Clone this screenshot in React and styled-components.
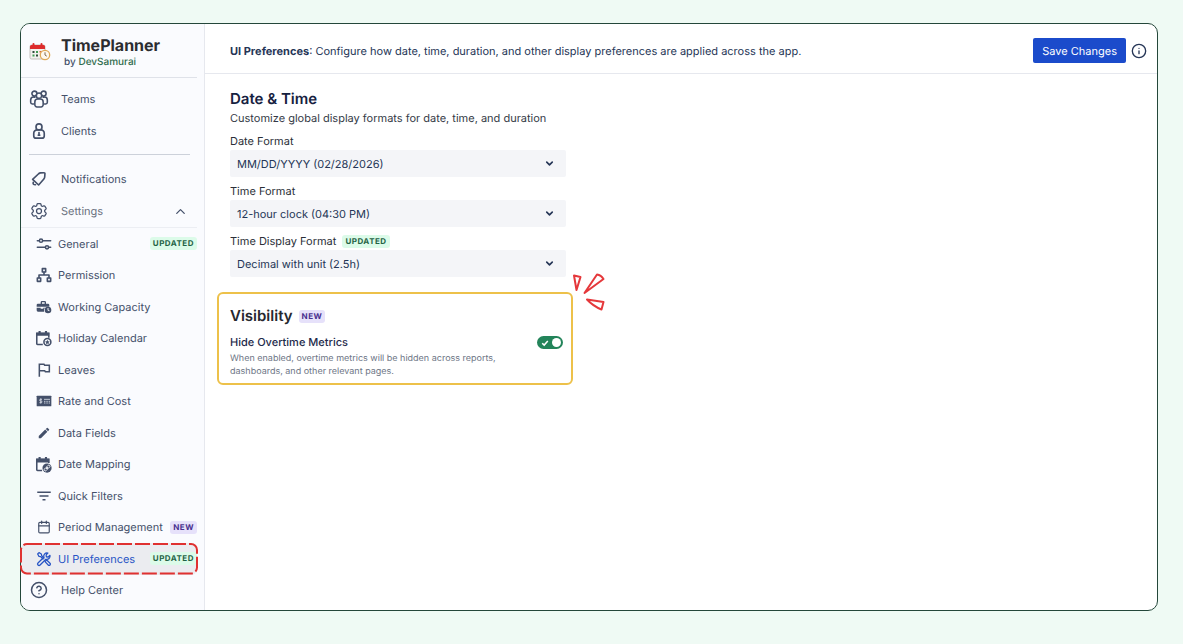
import React from "react";
import styled, { createGlobalStyle } from "styled-components";
import { Calendar, ChevronDown, ChevronUp, CircleQuestionMark, Info } from "lucide-react";
import { HiOutlineCog6Tooth } from "react-icons/hi2";
import { MdEdit, MdFilterList } from "react-icons/md";

const LogoIcon = () => (
  <svg width="22" height="20" viewBox="0 0 22 20" aria-hidden="true">
    <rect x="1" y="3" width="15" height="14" rx="1.5" fill="#f3f1ee" stroke="#b9b4ad" strokeWidth="0.8" />
    <path d="M1 7V4.5A1.5 1.5 0 0 1 2.500 3h12A1.500 1.500 0 0 1 16 4.500V7z" fill="#dd2c2c" />
    <path d="M4.500 2v2.500M12.500 2v2.500" stroke="#dd2c2c" strokeWidth="2" strokeLinecap="round" />
    <path d="M7 9h2v2H7zM3.500 12.500h2v2h-2z" fill="#3f9b52" />
    <path d="M3.500 9h2v2h-2zM7 12.500h2v2H7z" fill="#2f4b3a" />
    <path d="M10.500 9h2v1.500h-2z" fill="#e0673a" />
    <circle cx="16" cy="13" r="4.700" fill="#fff8ec" stroke="#dfa956" strokeWidth="1.300" />
    <path d="M16 10.300V13l1.800 1.200" stroke="#7b6a55" fill="none" strokeWidth="1" />
  </svg>
);

const Line = ({ size = 18, width = 2, children }) => (
  <svg
    width={size}
    height={size}
    viewBox="0 0 24 24"
    fill="none"
    stroke="currentColor"
    strokeWidth={width}
    strokeLinecap="round"
    strokeLinejoin="round"
    aria-hidden="true"
  >
    {children}
  </svg>
);

const TeamsIcon = () => (
  <Line size={20} width={1.900}>
    <circle cx="6.500" cy="5.500" r="3" />
    <circle cx="17.500" cy="5.500" r="3" />
    <circle cx="12" cy="8" r="3.200" fill="#fafbfe" />
    <path d="M5.500 18H4a2 2 0 0 1-2-2v-3a3.500 3.500 0 0 1 3.500-3.300h1.700" />
    <path d="M18.500 18H20a2 2 0 0 0 2-2v-3a3.500 3.500 0 0 0-3.500-3.300h-1.700" />
    <path d="M7 15.500a3.500 3.500 0 0 1 3.500-3.500h3a3.500 3.500 0 0 1 3.500 3.500V19a2.500 2.500 0 0 1-2.500 2.500h-5A2.500 2.500 0 0 1 7 19z" />
  </Line>
);

const ClientsIcon = () => (
  <Line size={18} width={2.200}>
    <circle cx="12" cy="6.500" r="4" />
    <path d="M5 15a4.500 4.500 0 0 1 4.500-4.500h5A4.500 4.500 0 0 1 19 15v3.500a3 3 0 0 1-3 3H8a3 3 0 0 1-3-3z" />
    <path d="M12 14v3.500M11 17.500h2" />
  </Line>
);

const NotificationsIcon = () => (
  <Line size={18} width={2.200}>
    <path d="M3.500 12.500 11.500 5q1.200-1 2.600-1.100l4.600-.2q1.300 0 1.200 1.300l-.3 4.300q-.1 1.500-1.100 2.600L11.500 20z" />
    <path d="M4.300 16.500q-.8 3.300 3 3.200" />
  </Line>
);

const GeneralIcon = () => (
  <Line size={16} width={2.300}>
    <path d="M2 7h3M10 7h12M2 17h12M19 17h3" />
    <circle cx="7.500" cy="7" r="2.400" />
    <circle cx="16.500" cy="17" r="2.400" />
  </Line>
);

const PermissionIcon = () => (
  <Line size={16} width={2.400}>
    <rect x="9.500" y="2.500" width="5" height="5" />
    <rect x="2" y="16.500" width="5" height="5" />
    <rect x="17" y="16.500" width="5" height="5" />
    <path d="M12 8v4M4.500 16v-4h15v4" />
  </Line>
);

const CapacityIcon = () => (
  <svg width="16" height="16" viewBox="0 0 24 24" fill="currentColor" aria-hidden="true">
    <path d="M7 7V5a2 2 0 0 1 2-2h4a2 2 0 0 1 2 2v2h3a2 2 0 0 1 2 2v2.500H1V9a2 2 0 0 1 2-2zm2 0h4V5H9z" />
    <path d="M1 13h6v1.500h4V13h2.500a6 6 0 0 0-1.300 6H3a2 2 0 0 1-2-2z" />
    <path fillRule="evenodd" d="M18 11.500a5 5 0 1 1 0 10 5 5 0 0 1 0-10zm-.7 2v3.400l2.400 1.400.7-1.100-1.700-1v-2.700z" />
  </svg>
);

const HolidayIcon = () => (
  <svg width="17" height="17" viewBox="0 0 24 24" fill="none" stroke="currentColor" aria-hidden="true">
    <path d="M11 20.500H3.500a1 1 0 0 1-1-1V4.500h17V11" strokeWidth="2.200" />
    <path d="M2 4h18v4H2zM5 1.500h3v4H5zM14 1.500h3v4h-3z" fill="currentColor" stroke="none" />
    <circle cx="17.500" cy="17" r="4.900" strokeWidth="2.200" />
    <path d="m17.500 13.800 1 2.200 2.300.3-1.700 1.600.4 2.300-2-1.200-2 1.200.4-2.300-1.700-1.600 2.300-.3z" fill="currentColor" stroke="none" />
  </svg>
);

const LeavesIcon = () => (
  <svg width="16" height="16" viewBox="0 0 24 24" fill="none" stroke="currentColor" strokeWidth="2.300" aria-hidden="true">
    <path d="M5 22V3.500h7l1 1.500h7v9.500h-6l-1-1.500H5" />
  </svg>
);

const MappingIcon = () => (
  <svg width="17" height="17" viewBox="0 0 24 24" fill="none" stroke="currentColor" aria-hidden="true">
    <path d="M10 20.500H3.500a1 1 0 0 1-1-1V4.500h17V10" strokeWidth="2.200" />
    <path d="M2 4h18v5H2zM5 1.500h3v4H5zM14 1.500h3v4h-3z" fill="currentColor" stroke="none" />
    <circle cx="17" cy="17" r="6.500" fill="currentColor" stroke="none" />
    <g stroke="#fafbfe" strokeWidth="1.200" transform="rotate(-45 17 17)">
      <rect x="12" y="15.300" width="5" height="3.400" rx="1.700" />
      <rect x="17" y="15.300" width="5" height="3.400" rx="1.700" />
      <path d="M15 17h4" />
    </g>
  </svg>
);

const RateIcon = () => (
  <svg width="16" height="16" viewBox="0 0 24 24" fill="none" aria-hidden="true">
    <rect x="1" y="4" width="22" height="16" rx="1" fill="currentColor" />
    <path
      d="M9 9.500H6.700a1.200 1.200 0 0 0 0 2.500h1a1.200 1.200 0 0 1 0 2.500H5.200M7.200 8v8M12 9.500h9M12 12.500h2.200M15.500 12.500h2.200M19 12.500h2M12 15h2.200M15.500 15h2.200M19 15h2"
      stroke="#dfe4ee"
      strokeWidth="1.200"
    />
  </svg>
);

const ToolsIcon = () => (
  <Line size={16} width={1.900}>
    <path d="M2.500 4.500l2-2 3.500 2 .5 2.500 3.500 3.500M2.500 4.500l2 3.500 2.500.5 3.500 3.500" />
    <path d="m13.500 16 2.500-2.500 5 4.800a1.900 1.900 0 0 1-2.700 2.700z" />
    <path d="M21 6.500 18.300 9l-2.800-.3-.3-2.800L17.800 3a5 5 0 0 0-6 6.300L3 18a2.100 2.100 0 0 0 3.100 3.100l8.700-8.700A5 5 0 0 0 21 6.500z" />
  </Line>
);

const SparkIcon = () => (
  <svg width="34" height="42" viewBox="0 0 34 42" fill="none" stroke="#e5383b" strokeWidth="2" strokeLinejoin="round" aria-hidden="true">
    <path d="M2 3.500 8.500 5 4.500 18z" />
    <path d="M12.500 21 25 2.500Q29 3 31.500 7z" />
    <path d="M15 27.500 31.500 30 29.500 37.500Q21 34 15 27.500z" />
  </svg>
);

const mainLinks = [
  { label: "Teams", icon: <TeamsIcon /> },
  { label: "Clients", icon: <ClientsIcon /> },
];

const settingLinks = [
  { label: "General", icon: <GeneralIcon />, tag: "UPDATED" },
  { label: "Permission", icon: <PermissionIcon /> },
  { label: "Working Capacity", icon: <CapacityIcon /> },
  { label: "Holiday Calendar", icon: <HolidayIcon /> },
  { label: "Leaves", icon: <LeavesIcon /> },
  { label: "Rate and Cost", icon: <RateIcon /> },
  { label: "Data Fields", icon: <MdEdit size={14} /> },
  { label: "Date Mapping", icon: <MappingIcon /> },
  { label: "Quick Filters", icon: <MdFilterList size={18} /> },
  { label: "Period Management", icon: <Calendar size={14} />, tag: "NEW" },
  { label: "UI Preferences", icon: <ToolsIcon />, tag: "UPDATED", active: true },
];

const fields = [
  { id: "date-format", label: "Date Format", value: "MM/DD/YYYY (02/28/2026)" },
  { id: "time-format", label: "Time Format", value: "12-hour clock (04:30 PM)" },
  { id: "time-display", label: "Time Display Format", value: "Decimal with unit (2.5h)", tag: "UPDATED" },
];

const App = () => {
  return (
    <Page>
      <GlobalStyle />
      <Frame>
        <Sidebar>
          <Brand>
            <LogoIcon />
            <div>
              <BrandName>TimePlanner</BrandName>
              <BrandBy>
                by <a href="#devsamurai">DevSamurai</a>
              </BrandBy>
            </div>
          </Brand>
          <NavGroup>
            {mainLinks.map((link) => (
              <NavLink key={link.label} href="#">
                <IconBox>{link.icon}</IconBox>
                {link.label}
              </NavLink>
            ))}
          </NavGroup>
          <Divider />
          <NavGroup>
            <NavLink href="#">
              <IconBox>
                <NotificationsIcon />
              </IconBox>
              Notifications
            </NavLink>
            <NavToggle type="button" aria-expanded="true">
              <IconBox>
                <HiOutlineCog6Tooth size={20} />
              </IconBox>
              Settings
              <ChevronUp size={15} />
            </NavToggle>
          </NavGroup>
          <SubNav>
            {settingLinks.map((link) => (
              <SubLink key={link.label} href="#" $active={link.active}>
                <SubIconBox>{link.icon}</SubIconBox>
                {link.label}
                {link.tag && <Tag $kind={link.tag}>{link.tag}</Tag>}
                {link.active && (
                  <Outline aria-hidden="true">
                    <rect x="1" y="1" rx="6" />
                  </Outline>
                )}
              </SubLink>
            ))}
            <NavLink href="#">
              <IconBox>
                <CircleQuestionMark size={18} />
              </IconBox>
              Help Center
            </NavLink>
          </SubNav>
        </Sidebar>
        <Main>
          <TopBar>
            <Intro>
              <b>UI Preferences</b>: Configure how date, time, duration, and other display
              preferences are applied across the app.
            </Intro>
            <SaveButton type="button">Save Changes</SaveButton>
            <InfoButton type="button" aria-label="Information">
              <Info size={16} />
            </InfoButton>
          </TopBar>
          <Content>
            <Section>
              <Title>Date &amp; Time</Title>
              <Subtitle>Customize global display formats for date, time, and duration</Subtitle>
              {fields.map((field) => (
                <Field key={field.id}>
                  <FieldLabel htmlFor={field.id}>
                    {field.label}
                    {field.tag && <Tag $kind={field.tag}>{field.tag}</Tag>}
                  </FieldLabel>
                  <SelectWrap>
                    <Select id={field.id}>
                      <option>{field.value}</option>
                    </Select>
                    <ChevronDown size={11} strokeWidth={3.500} />
                  </SelectWrap>
                </Field>
              ))}
            </Section>
            <Card>
              <CardTitle>
                Visibility <Tag $kind="NEW">NEW</Tag>
              </CardTitle>
              <Row>
                <RowLabel htmlFor="hide-overtime">Hide Overtime Metrics</RowLabel>
                <Switch>
                  <input id="hide-overtime" type="checkbox" defaultChecked />
                  <svg width="8" height="8" viewBox="0 0 8 8" aria-hidden="true">
                    <path d="m1.200 4.200 2 1.900 3.600-4" fill="none" stroke="#fff" strokeWidth="1.500" />
                  </svg>
                </Switch>
              </Row>
              <Hint>
                When enabled, overtime metrics will be hidden across reports, dashboards, and other
                relevant pages.
              </Hint>
              <Spark>
                <SparkIcon />
              </Spark>
            </Card>
          </Content>
        </Main>
      </Frame>
    </Page>
  );
};

const GlobalStyle = createGlobalStyle`
  * {
    box-sizing: border-box;
  }

  body {
    margin: 0;
    background: #effaf4;
    color: #253556;
    font-family: Inter, "Liberation Sans", sans-serif;
    font-size: 11px;
    line-height: 16px;
    text-rendering: geometricPrecision;
  }

  h1, h2, p {
    margin: 0;
  }

  a {
    color: inherit;
    text-decoration: none;
  }

  button, select {
    font: inherit;
    color: inherit;
    border: 0;
    text-rendering: inherit;
  }

  svg {
    flex-shrink: 0;
  }
`;

const Page = styled.div`
  min-height: 100vh;
  display: flex;
  padding: 23px 25px 33px 20px;
`;

const Frame = styled.div`
  flex: 1;
  display: flex;
  border: 1px solid #24473a;
  border-radius: 10px;
  background: #fff;
`;

const Sidebar = styled.aside`
  width: 184px;
  display: flex;
  flex-direction: column;
  padding: 0 7px 4px 0;
  border-right: 1px solid #e6e8ee;
  border-radius: 9px 0 0 9px;
  background: #fafbfe;
  color: #44506a;
`;

const Brand = styled.div`
  height: 54px;
  display: flex;
  align-items: center;
  gap: 10px;
  padding: 2px 0 0 8px;
  border-bottom: 1px solid #dfe2e9;
`;

const BrandName = styled.h1`
  color: #2b2c30;
  font-size: 16px;
  font-weight: 700;
  line-height: 20px;
`;

const BrandBy = styled.p`
  padding-left: 3px;
  font-size: 10px;
  line-height: 14px;
  font-weight: 500;

  a {
    color: #2f6b4d;
  }
`;

const NavGroup = styled.nav`
  display: flex;
  flex-direction: column;
  padding-top: 5px;
`;

const NavLink = styled.a`
  height: 32px;
  display: flex;
  align-items: center;
  gap: 12px;
  padding-left: 8px;
`;

const NavToggle = styled.button`
  height: 32px;
  display: flex;
  align-items: center;
  gap: 12px;
  padding: 0 9px 0 8px;
  background: none;
  color: #6b7280;

  > svg {
    margin-left: auto;
    color: #44506a;
  }
`;

const IconBox = styled.span`
  width: 20px;
  display: flex;
  justify-content: center;
  color: #44506a;
`;

const Divider = styled.hr`
  width: 161px;
  margin: 7px 0 3px 8px;
  border: 0;
  border-top: 1px solid #ccd1da;
`;

const SubNav = styled.nav`
  flex: 1;
  display: grid;
  grid-auto-rows: minmax(28px, 1fr);
  border-top: 1px solid #eceef3;

  ${NavLink} {
    height: auto;
  }
`;

const SubLink = styled.a`
  position: relative;
  display: flex;
  align-items: center;
  gap: 6px;
  padding-left: 14px;
  border-radius: 6px;
  background: ${({ $active }) => ($active ? "#ebecf0" : "transparent")};
  color: ${({ $active }) => ($active ? "#2754c5" : "inherit")};
`;

const SubIconBox = styled.span`
  width: 17px;
  display: flex;
  justify-content: center;
`;

const Tag = styled.span`
  padding: 0 3px;
  border-radius: 3px;
  font-size: 8px;
  font-weight: 700;
  line-height: 13px;
  letter-spacing: 0.5px;
  background: ${({ $kind }) => ($kind === "NEW" ? "#e6e1fa" : "#dcfbe9")};
  color: ${({ $kind }) => ($kind === "NEW" ? "#49308f" : "#1f6244")};

  ${SubLink} & {
    margin-left: auto;
  }
`;

const Outline = styled.svg`
  position: absolute;
  inset: 0 -1px;
  width: calc(100% + 2px);
  height: 100%;

  rect {
    width: calc(100% - 2px);
    height: calc(100% - 2px);
    fill: none;
    stroke: #e03131;
    stroke-width: 2px;
    stroke-dasharray: 15 3;
  }
`;

const Main = styled.main`
  flex: 1;
  min-width: 0;
`;

const TopBar = styled.header`
  min-height: 50px;
  display: flex;
  align-items: center;
  padding: 4px 10px 0 25px;
  border-bottom: 1px solid #e6e8ee;
`;

const Intro = styled.p`
  flex: 1;
`;

const SaveButton = styled.button`
  height: 25px;
  padding: 0 9px;
  border-radius: 2px;
  background: #1b4bcb;
  color: #fff;
  cursor: pointer;
`;

const InfoButton = styled.button`
  display: flex;
  margin-left: 5px;
  padding: 0;
  background: none;
  cursor: pointer;
`;

const Content = styled.div`
  max-width: 368px;
  padding: 15px 0 15px 12px;
`;

const Section = styled.section`
  padding: 0 7px 0 13px;
`;

const Title = styled.h2`
  color: #16213f;
  font-size: 15px;
  font-weight: 600;
  line-height: 20px;
`;

const Subtitle = styled.p`
  margin: 1px 0 7px;
  color: #343a46;
`;

const Field = styled.div`
  margin-bottom: 6px;
`;

const FieldLabel = styled.label`
  display: flex;
  align-items: center;
  gap: 6px;
  margin-bottom: 1px;
  color: #2b2f38;
`;

const SelectWrap = styled.div`
  display: flex;
  align-items: center;

  svg {
    margin-left: -22px;
    pointer-events: none;
  }
`;

const Select = styled.select`
  appearance: none;
  width: 100%;
  height: 27px;
  padding: 0 28px 0 7px;
  border-radius: 2px;
  background: #f4f5f8;
`;

const Card = styled.section`
  position: relative;
  margin-top: 15px;
  padding: 11px 8px 5px 11px;
  border: 2px solid #edc14a;
  border-radius: 6px;
`;

const CardTitle = styled.h2`
  display: flex;
  align-items: center;
  gap: 6px;
  color: #26282e;
  font-size: 15px;
  font-weight: 600;
  line-height: 22px;
`;

const Row = styled.div`
  display: flex;
  align-items: center;
  justify-content: space-between;
  margin-top: 7px;
`;

const RowLabel = styled.label`
  color: #1e2b4b;
  font-weight: 500;
`;

const Switch = styled.span`
  position: relative;
  display: flex;

  input {
    appearance: none;
    width: 26px;
    height: 13px;
    margin: 0;
    border-radius: 7px;
    background: #8590a2;
  }

  input::after {
    content: "";
    display: block;
    width: 9px;
    height: 9px;
    margin: 2px;
    border-radius: 50%;
    background: #fff;
  }

  input:checked {
    background: #23845a;
  }

  input:checked::after {
    margin-left: 15px;
  }

  svg {
    position: absolute;
    top: 3px;
    left: 4px;
  }
`;

const Hint = styled.p`
  max-width: 300px;
  margin-top: 2px;
  color: #6e7686;
  font-size: 9px;
  line-height: 13px;
`;

const Spark = styled.div`
  position: absolute;
  top: -22px;
  right: -35px;
`;

export default App;
